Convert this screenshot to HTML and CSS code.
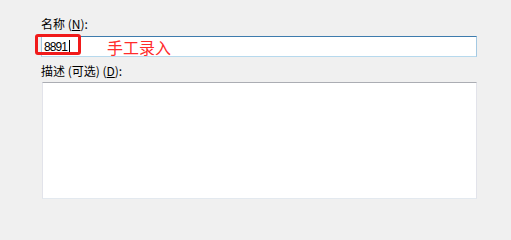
FILE: index.html
```html
<!DOCTYPE html>
<html lang="zh">
<head>
<meta charset="utf-8">
<title>名称</title>
<link rel="stylesheet" href="styles.css">
</head>
<body>
<div class="form">
  <div class="label">名称 (<u>N</u>):</div>
  <div class="field-wrap">
    <div class="input">
      <span class="value">8891</span><span class="caret"></span>
      <span class="note">手工录入</span>
    </div>
    <div class="highlight"></div>
  </div>
  <div class="label label-desc">描述 (可选) (<u>D</u>):</div>
  <div class="textarea"></div>
</div>
</body>
</html>
```
FILE: styles.css
```css
html, body {
  margin: 0;
  padding: 0;
  background: #f0f0f0;
  width: 511px;
  height: 224px;
  overflow: hidden;
}
.form {
  display: flex;
  flex-direction: column;
  padding: 16px 34px 0 41px;
  font-family: "Noto Sans CJK SC", "Noto Sans", sans-serif;
  font-size: 12px;
  color: #000;
}
.label {
  line-height: 16px;
  height: 16px;
  white-space: nowrap;
}
.label u {
  text-decoration-thickness: 1px;
  text-underline-offset: 1px;
}
.field-wrap {
  position: relative;
  margin-top: 4px;
}
.input {
  box-sizing: border-box;
  height: 21px;
  width: 436px;
  background: #fff;
  border: 1px solid #a4c9e3;
  border-top-color: #3d7bad;
  border-bottom-color: #b7d9ed;
  display: flex;
  align-items: center;
  padding-left: 2px;
}
.value {
  font-family: "Liberation Sans", Arial, sans-serif;
  font-size: 12px;
  letter-spacing: -0.9px;
  line-height: 14px;
}
.caret {
  width: 1px;
  height: 14px;
  background: #000;
  margin-left: 2px;
}
.note {
  margin-left: 37px;
  font-size: 16px;
  line-height: 18px;
  color: #ff2b2b;
}
.highlight {
  position: absolute;
  left: -6px;
  top: -2px;
  width: 46px;
  height: 21px;
  box-sizing: border-box;
  border: 3px solid #f01a1a;
  border-radius: 3px;
}
.label-desc {
  margin-top: 6px;
}
.textarea {
  margin-top: 3px;
  margin-left: 1px;
  box-sizing: border-box;
  width: 435px;
  height: 117px;
  background: #fff;
  border: 1px solid #e2e3ea;
  border-top-color: #abadb3;
  border-bottom-color: #e3e9ef;
}
```
